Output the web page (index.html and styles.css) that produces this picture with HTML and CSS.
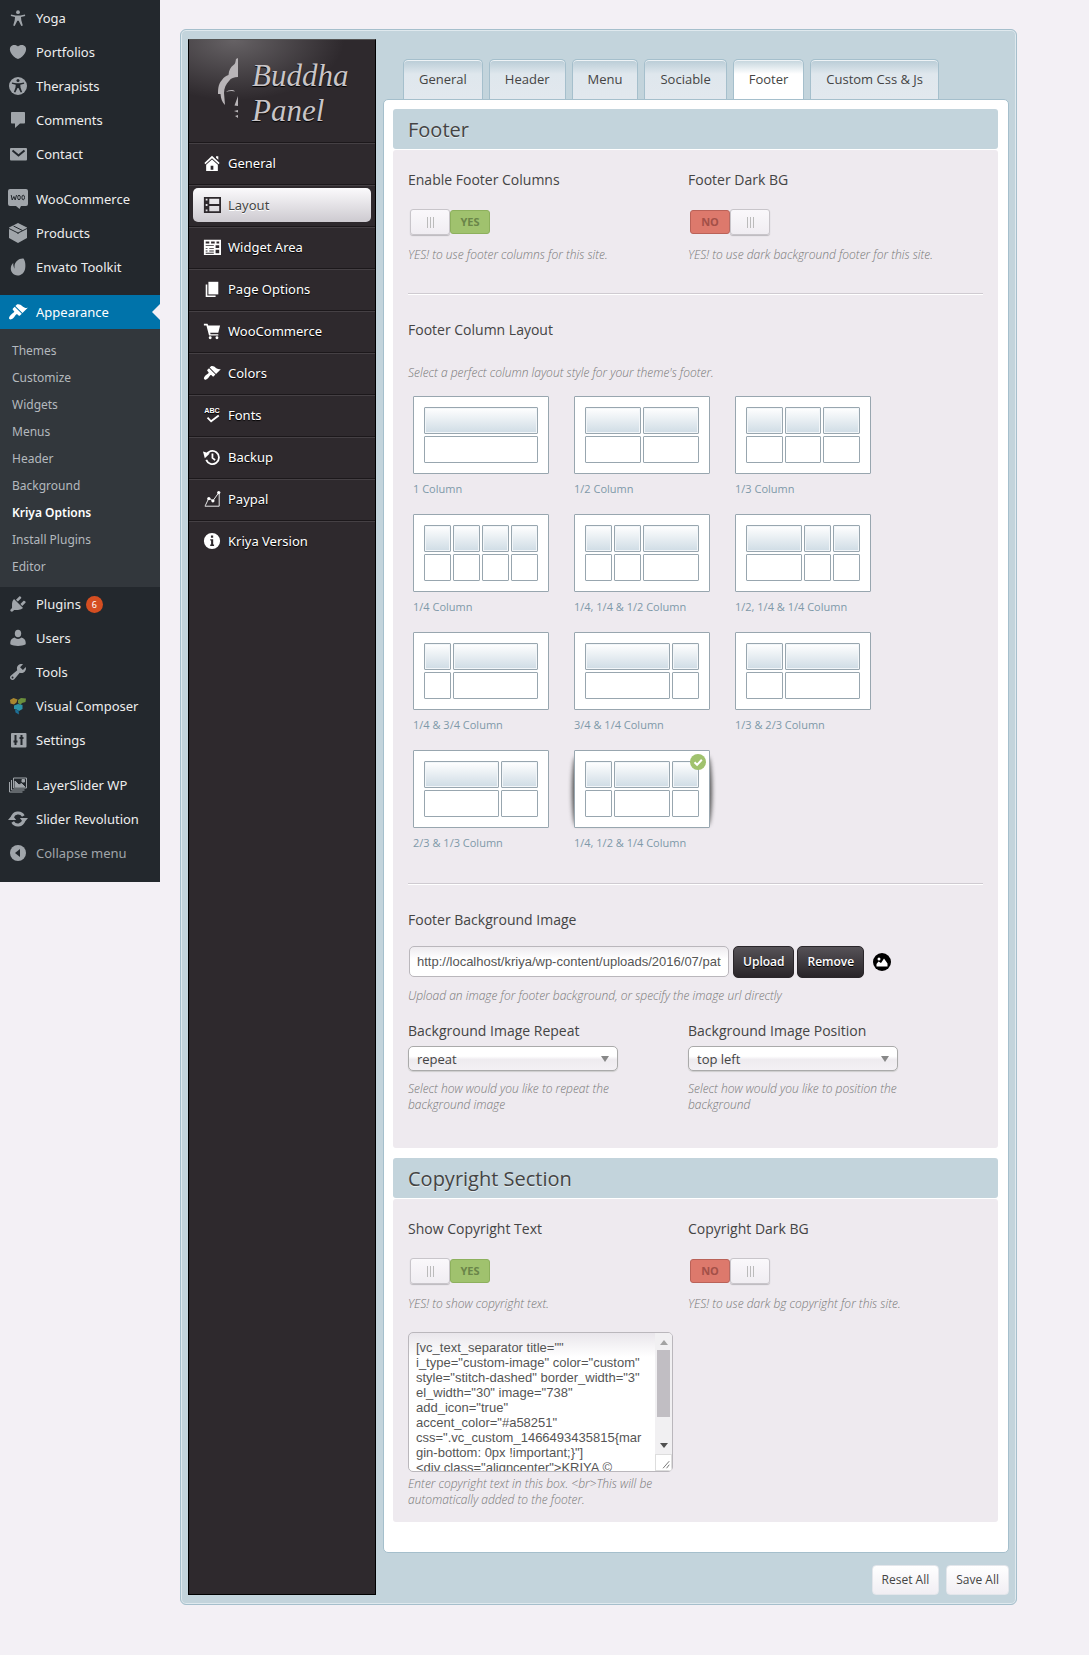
FILE: index.html
```html
<!DOCTYPE html>
<html lang="en">
<head>
<meta charset="utf-8">
<meta name="viewport" content="width=device-width, initial-scale=1">
<title>Kriya Options</title>
<link rel="stylesheet" href="styles.css">
</head>
<body>
<div class="page">
  <nav class="admin-menu" aria-label="Admin menu">
    <ul class="menu-group">
      <li><a href="#"><svg class="icon" viewBox="0 0 20 20"><circle cx="10" cy="4.2" r="1.9"/><path d="M3 6.6l4.6.9h4.8l4.6-.9.2 1.4-4.2 1.1.3 3.1 1.5 5.2-1.5.5-2.6-5.2h-1.4l-2.6 5.2-1.5-.5 1.5-5.2.3-3.1L2.800 8z"/></svg><span>Yoga</span></a></li>
      <li><a href="#"><svg class="icon" viewBox="0 0 20 20"><path d="M10 17.100c3.300-1.400 5.700-3.800 7-6.200 1.300-2.400 1.500-4.800.4-6.200-1-1.300-2.400-1.800-3.800-1.700-1.300 0-2.700.6-3.600 1.400-.9-.8-2.300-1.400-3.600-1.400C5 2.900 3.700 3.400 2.600 4.700c-1.100 1.400-.9 3.800.4 6.200 1.300 2.400 3.700 4.800 7 6.200z"/></svg><span>Portfolios</span></a></li>
      <li><a href="#"><svg class="icon" viewBox="0 0 20 20"><circle cx="10" cy="10" r="9"/><g class="hole"><circle cx="10" cy="4.600" r="1.500"/><path d="M4 6.500l4.200.700h3.600l4.200-.7.2 1.300-3.900.9.200 2.800 1.600 4.500-1.400.5L10.500 12h-1l-2.200 4.500-1.400-.5 1.600-4.500.2-2.800-3.900-.9z"/></g></svg><span>Therapists</span></a></li>
      <li><a href="#"><svg class="icon" viewBox="0 0 20 20"><path d="M4 2h12c.6 0 1 .4 1 1v9.500c0 .6-.4 1-1 1h-4l-5 4.500v-4.500H4c-.6 0-1-.4-1-1V3c0-.6.400-1 1-1z"/></svg><span>Comments</span></a></li>
      <li><a href="#"><svg class="icon" viewBox="0 0 20 20"><rect x="2" y="4" width="17" height="12.500" rx="1"/><path class="hole-line" d="M4.500 6.500l6 5 6-5"/></svg><span>Contact</span></a></li>
    </ul>
    <ul class="menu-group">
      <li><a href="#"><svg class="icon" viewBox="0 0 20 20"><path d="M2 0h16a2 2 0 0 1 2 2v13a2 2 0 0 1-2 2h-5l-1.500 3L8 17H2a2 2 0 0 1-2-2V2a2 2 0 0 1 2-2z"/><path class="woo-line" d="M3.200 6l1 5 1.700-3.500L7.200 11l1.300-5"/><ellipse class="woo-line" cx="11" cy="8.500" rx="1.300" ry="2.300"/><ellipse class="woo-line" cx="15.200" cy="8.500" rx="1.300" ry="2.300"/></svg><span>WooCommerce</span></a></li>
      <li><a href="#"><svg class="icon" viewBox="0 0 20 20"><path d="M10 0l9 4.500v10.500l-9 5-9-5V4.500z"/><path class="hole-thin" d="M1 5.500l9 4.500 9-4.500M10 10v1M5.500 3l9 4.500"/></svg><span>Products</span></a></li>
      <li><a href="#"><svg class="icon" viewBox="0 0 20 20"><path d="M15.500 1.500c-4.500-.5-8.500 3-9 7.200-.1 1-.1 2 .2 3C5.400 9.700 5 7.500 5.300 5.800 2.500 8.700 2 12.700 4.200 15.800c2.600 3.500 7.500 3.500 10.500.7 3.700-3.500 3.300-11.500.8-15z"/></svg><span>Envato Toolkit</span></a></li>
    </ul>
    <ul class="menu-group">
      <li class="current"><a href="#"><svg class="icon" viewBox="0 0 20 20"><path d="M14.480 11.060L7.410 3.990l1.500-1.500c.5-.56 2.300-.47 3.510.32 1.210.8 1.430 1.280 2.910 2.100 1.180.64 2.450 1.260 4.450.85zm-.71.71L6.700 4.700 4.930 6.470c-.39.39-.39 1.020 0 1.410l1.060 1.060c.39.39.39 1.030 0 1.420-.6.6-1.430 1.110-2.210 1.690-.35.26-.7.53-1.010.84C1.430 14.230.4 16.080 1.400 17.070c.99 1 2.840-.03 4.180-1.360.31-.31.580-.66.850-1.020.57-.78 1.080-1.610 1.690-2.210.39-.39 1.020-.39 1.410 0l1.060 1.060c.39.39 1.020.39 1.410 0z"/></svg><span>Appearance</span></a>
        <ul class="submenu">
          <li><a href="#">Themes</a></li>
          <li><a href="#">Customize</a></li>
          <li><a href="#">Widgets</a></li>
          <li><a href="#">Menus</a></li>
          <li><a href="#">Header</a></li>
          <li><a href="#">Background</a></li>
          <li><a href="#" class="is-on">Kriya Options</a></li>
          <li><a href="#">Install Plugins</a></li>
          <li><a href="#">Editor</a></li>
        </ul>
      </li>
      <li><a href="#"><svg class="icon" viewBox="0 0 20 20"><path d="M13.110 4.360L9.870 7.600 8 5.730l3.240-3.240c.35-.34 1.050-.2 1.560.32.52.51.66 1.210.31 1.550zm-8 1.770l.91-1.120 9.010 9.010-1.190.84c-.71.71-2.630 1.160-3.820 1.160H6.140L4.900 17.260c-.59.59-1.540.59-2.120 0-.59-.58-.59-1.530 0-2.120l1.240-1.240v-3.880c0-1.130.4-3.190 1.090-3.890zm7.260 3.970l3.240-3.240c.34-.35 1.040-.21 1.550.31.520.51.660 1.210.31 1.550l-3.240 3.250z"/></svg><span>Plugins</span><span class="badge">6</span></a></li>
      <li><a href="#"><svg class="icon" viewBox="0 0 20 20"><ellipse cx="10" cy="5.500" rx="3.200" ry="3.800"/><path d="M6.500 9.500c1 .9 2 1.400 3.500 1.400s2.500-.5 3.500-1.400c2.400.5 4.200 2.500 4.200 5v1.700c-2 1.200-4.700 1.700-7.700 1.700s-5.700-.5-7.700-1.700v-1.700c0-2.500 1.800-4.500 4.200-5z"/></svg><span>Users</span></a></li>
      <li><a href="#"><svg class="icon" viewBox="0 0 20 20"><path fill-rule="evenodd" d="M16.680 9.770c-1.340 1.340-3.300 1.670-4.950.99l-5.410 6.520c-.99.99-2.590.99-3.580 0s-.99-2.590 0-3.570l6.520-5.420c-.68-1.650-.35-3.610.99-4.950 1.280-1.280 3.120-1.620 4.720-1.060l-2.890 2.890 2.820 2.820 2.860-2.870c.53 1.580.18 3.390-1.080 4.650zM3.810 16.210c.4.39 1.040.39 1.430 0 .4-.4.4-1.040 0-1.430-.39-.4-1.030-.4-1.430 0-.39.39-.39 1.030 0 1.430z"/></svg><span>Tools</span></a></li>
      <li><a href="#"><svg class="icon" viewBox="0 0 20 20"><path fill="#a8862f" d="M2 4l3.500-2 4 1.500-1 3L6 8.500 2.500 7.500z"/><path fill="#6b8f3c" d="M10 4l3-2 5 .5-.5 3.500-3.500 1-1.500 2L10 7z"/><path fill="#2c93a6" d="M6 9.500l4-1.500 4.500 1v4L11 15l-2.500-1.500L6 13z"/><path fill="#1d6f96" d="M7 13.500l3.500 1 .5 4-3.500-2z"/></svg><span>Visual Composer</span></a></li>
      <li><a href="#"><svg class="icon" viewBox="0 0 20 20"><rect x="3" y="3" width="15.500" height="14.500" rx="1"/><path class="hole-line" d="M7.500 5v10M5.500 11.500h4M13.500 5v10M11.500 8h4"/></svg><span>Settings</span></a></li>
    </ul>
    <ul class="menu-group">
      <li><a href="#"><svg class="icon outline" viewBox="0 0 20 20"><path d="M5.500 3h13v10h-13zM3.500 5v10h13M1.500 7v10h13"/><path class="solid" d="M7 12V6l4 4 2.500-1.500L17 12zM14 4.500h2.500V7H14z"/></svg><span>LayerSlider WP</span></a></li>
      <li><a href="#"><svg class="icon outline heavy" viewBox="0 0 20 20"><path d="M4.300 8.500A6 6 0 0 1 15.300 7M15.700 11.500A6 6 0 0 1 4.700 13"/><path class="solid" stroke="none" d="M0 11l4.200-5 4 5zM20 9l-4.200 5-4-5z"/></svg><span>Slider Revolution</span></a></li>
      <li class="collapse"><a href="#"><svg class="icon" viewBox="0 0 20 20"><circle cx="10" cy="10" r="8"/><path class="hole" d="M12 6v8l-5-4z"/></svg><span>Collapse menu</span></a></li>
    </ul>
  </nav>

  <main class="panel">
    <aside class="side">
      <div class="brand">
        <svg class="brand-face" viewBox="0 0 20 62"><path d="M20 0v19c-4 0-7 1-9 4-3 3-5 7-5 12l1 12c-3-3-4-6-4.500-11L0 36c0-7 1-11 4-14 2-3 4-4 6.500-5 .5-5 2-8 5-10 2-1 2-4 2.500-6z"/><path d="M8 34c2-2 7-3 9-.5-3-1-6-.5-9 .5zM20 38l-3.500 9.500 3.500.5zM16 53l4-1v2.500zM17 58l3-1v3z"/></svg>
        <span class="brand-name">Buddha<br>Panel</span>
      </div>
      <ul class="side-menu">
        <li><a href="#"><svg class="icon" viewBox="0 0 20 20"><path d="M10 2l8.500 8-1.200 1.300L10 4.600l-7.300 6.700L1.500 10zM14.500 2.500H17v4l-2.500-2.300z"/><path fill-rule="evenodd" d="M10 6l6.500 6v7h-13v-7zM8.500 13v4.500h3V13z"/></svg><span>General</span></a></li>
        <li class="is-active"><a href="#"><svg class="icon" viewBox="0 0 20 20"><path fill-rule="evenodd" d="M1 1h19v18H1zM7 3v6h11V3zM7 11v6h11v-6zM3 3v2h2V3zM3 9v2h2V9zM3 15v2h2v-2z"/></svg><span>Layout</span></a></li>
        <li><a href="#"><svg class="icon" viewBox="0 0 20 20"><path fill-rule="evenodd" d="M1 2h19v17H1zM3 4v2h4V4zM9 4v2h4V4zM15 4v2h3V4zM3 8v1h9V8zM3 11v1h2v-1zM7 11v1h5v-1zM3 14v1h2v-1zM7 14v1h5v-1zM3 16.500v1h9v-1zM14 8v3h4V8zM14 13v4h4v-4z"/></svg><span>Widget Area</span></a></li>
        <li><a href="#"><svg class="icon" viewBox="0 0 20 20"><path d="M6 2h11v14H6z"/><path d="M3 5h1.800v12.200H14V19H3z"/></svg><span>Page Options</span></a></li>
        <li><a href="#"><svg class="icon" viewBox="0 0 20 20"><path d="M1 2h4l.8 2H19l-2 8H8l.4 1.500H17V15H6.700L3.800 3.800H1z"/><circle cx="8" cy="17.500" r="1.600"/><circle cx="15.500" cy="17.500" r="1.600"/></svg><span>WooCommerce</span></a></li>
        <li><a href="#"><svg class="icon" viewBox="0 0 20 20"><path d="M14.480 11.060L7.410 3.990l1.500-1.500c.5-.56 2.300-.47 3.510.32 1.210.8 1.430 1.280 2.910 2.100 1.180.64 2.450 1.260 4.450.85zm-.71.71L6.700 4.700 4.930 6.470c-.39.39-.39 1.020 0 1.410l1.060 1.060c.39.39.39 1.030 0 1.420-.6.6-1.430 1.110-2.210 1.690-.35.26-.7.53-1.010.84C1.430 14.230.4 16.080 1.400 17.070c.99 1 2.840-.03 4.180-1.360.31-.31.580-.66.850-1.020.57-.78 1.080-1.610 1.690-2.210.39-.39 1.020-.39 1.410 0l1.060 1.060c.39.39 1.020.39 1.410 0z"/></svg><span>Colors</span></a></li>
        <li><a href="#"><svg class="icon" viewBox="0 0 20 20"><text class="abc" x="10" y="8" text-anchor="middle">ABC</text><path class="tick" d="M5 13l4 4 8.500-6.500"/></svg><span>Fonts</span></a></li>
        <li><a href="#"><svg class="icon" viewBox="0 0 20 20"><path class="tick" d="M3.600 8a7.300 7.300 0 1 1 0 5.200M10.500 6v5l3 2.500"/><path d="M0 4l7.500 2L2 11.500z"/></svg><span>Backup</span></a></li>
        <li><a href="#"><svg class="icon" viewBox="0 0 20 20"><path class="thin" d="M2 18h16V4M2.500 17.500L6.500 9l4.500 3L17.500 3"/><circle cx="6.500" cy="9.500" r="1.800"/><circle cx="11" cy="12" r="1.800"/><circle cx="17.500" cy="2.800" r="1.800"/></svg><span>Paypal</span></a></li>
        <li><a href="#"><svg class="icon" viewBox="0 0 20 20"><path fill-rule="evenodd" d="M10 1a9 9 0 1 1 0 18 9 9 0 0 1 0-18zM8.800 4v2.500h2.500V4zM8 8v1.500h1V14H8v1.500h4.300V14h-1V8z"/></svg><span>Kriya Version</span></a></li>
      </ul>
    </aside>

    <div class="content">
      <nav class="tabs" aria-label="Layout sections">
        <a href="#">General</a>
        <a href="#">Header</a>
        <a href="#">Menu</a>
        <a href="#">Sociable</a>
        <a href="#" class="is-active">Footer</a>
        <a href="#">Custom Css &amp; Js</a>
      </nav>

      <form class="sheet" id="options">
        <section class="box">
          <h2>Footer</h2>
          <div class="box-body">
            <div class="pair">
              <div class="field">
                <label class="label" for="footer-columns">Enable Footer Columns</label>
                <div class="switch on"><input type="checkbox" id="footer-columns" checked><span class="knob"></span><span class="state">YES</span></div>
                <p class="hint">YES! to use footer columns for this site.</p>
              </div>
              <div class="field">
                <label class="label" for="footer-dark">Footer Dark BG</label>
                <div class="switch"><input type="checkbox" id="footer-dark"><span class="state">NO</span><span class="knob"></span></div>
                <p class="hint">YES! to use dark background footer for this site.</p>
              </div>
            </div>
            <hr>
            <h3 class="label">Footer Column Layout</h3>
            <p class="hint intro">Select a perfect column layout style for your theme's footer.</p>
            <div class="layouts">
              <label class="layout"><input type="radio" name="layout"><span class="thumb c1"><i></i><i></i></span><span>1 Column</span></label>
              <label class="layout"><input type="radio" name="layout"><span class="thumb c2"><i></i><i></i><i></i><i></i></span><span>1/2 Column</span></label>
              <label class="layout"><input type="radio" name="layout"><span class="thumb c3"><i></i><i></i><i></i><i></i><i></i><i></i></span><span>1/3 Column</span></label>
              <label class="layout"><input type="radio" name="layout"><span class="thumb c4"><i></i><i></i><i></i><i></i><i></i><i></i><i></i><i></i></span><span>1/4 Column</span></label>
              <label class="layout"><input type="radio" name="layout"><span class="thumb c4"><i></i><i></i><i class="s2"></i><i></i><i></i><i class="s2"></i></span><span>1/4, 1/4 &amp; 1/2 Column</span></label>
              <label class="layout"><input type="radio" name="layout"><span class="thumb c4"><i class="s2"></i><i></i><i></i><i class="s2"></i><i></i><i></i></span><span>1/2, 1/4 &amp; 1/4 Column</span></label>
              <label class="layout"><input type="radio" name="layout"><span class="thumb c4"><i></i><i class="s3"></i><i></i><i class="s3"></i></span><span>1/4 &amp; 3/4 Column</span></label>
              <label class="layout"><input type="radio" name="layout"><span class="thumb c4"><i class="s3"></i><i></i><i class="s3"></i><i></i></span><span>3/4 &amp; 1/4 Column</span></label>
              <label class="layout"><input type="radio" name="layout"><span class="thumb c3"><i></i><i class="s2"></i><i></i><i class="s2"></i></span><span>1/3 &amp; 2/3 Column</span></label>
              <label class="layout"><input type="radio" name="layout"><span class="thumb c3"><i class="s2"></i><i></i><i class="s2"></i><i></i></span><span>2/3 &amp; 1/3 Column</span></label>
              <label class="layout chosen"><input type="radio" name="layout" checked><span class="thumb c4"><i></i><i class="s2"></i><i></i><i></i><i class="s2"></i><i></i></span><svg class="check" viewBox="0 0 16 16"><circle cx="8" cy="8" r="8"/><path d="M4.500 8.200l2.600 2.600 4.700-5"/></svg><span>1/4, 1/2 &amp; 1/4 Column</span></label>
            </div>
            <hr>
            <label class="label" for="bg-url">Footer Background Image</label>
            <div class="upload">
              <input type="text" id="bg-url" value="http://localhost/kriya/wp-content/uploads/2016/07/pattern.png">
              <button type="button" class="dark">Upload</button>
              <button type="button" class="dark">Remove</button>
              <svg class="preview" viewBox="0 0 18 18"><circle cx="9" cy="9" r="9"/><circle class="w" cx="6" cy="6" r="1.500"/><path class="w" d="M3.500 13.500V11l2-2.500L8 10l3-4.500 3.500 5v3z"/></svg>
            </div>
            <p class="hint after">Upload an image for footer background, or specify the image url directly</p>
            <div class="pair">
              <div class="field">
                <label class="label" for="bg-repeat">Background Image Repeat</label>
                <div class="select"><select id="bg-repeat"><option>repeat</option><option>no-repeat</option></select><svg viewBox="0 0 8 6"><path d="M0 0h8L4 6z"/></svg></div>
                <p class="hint after">Select how would you like to repeat the background image</p>
              </div>
              <div class="field">
                <label class="label" for="bg-position">Background Image Position</label>
                <div class="select"><select id="bg-position"><option>top left</option><option>center</option></select><svg viewBox="0 0 8 6"><path d="M0 0h8L4 6z"/></svg></div>
                <p class="hint after">Select how would you like to position the background</p>
              </div>
            </div>
          </div>
        </section>

        <section class="box compact">
          <h2>Copyright Section</h2>
          <div class="box-body">
            <div class="pair">
              <div class="field">
                <label class="label" for="copy-show">Show Copyright Text</label>
                <div class="switch on"><input type="checkbox" id="copy-show" checked><span class="knob"></span><span class="state">YES</span></div>
                <p class="hint">YES! to show copyright text.</p>
              </div>
              <div class="field">
                <label class="label" for="copy-dark">Copyright Dark BG</label>
                <div class="switch"><input type="checkbox" id="copy-dark"><span class="state">NO</span><span class="knob"></span></div>
                <p class="hint">YES! to use dark bg copyright for this site.</p>
              </div>
            </div>
            <div class="editor">
              <textarea aria-label="Copyright text" spellcheck="false">[vc_text_separator title="" i_type="custom-image" color="custom" style="stitch-dashed" border_width="3" el_width="30" image="738" add_icon="true" accent_color="#a58251" css=".vc_custom_1466493435815{margin-bottom: 0px !important;}"]
&lt;div class="aligncenter"&gt;KRIYA ©</textarea>
              <div class="scroller" aria-hidden="true">
                <svg viewBox="0 0 8 5"><path fill="#a3a3a3" d="M0 5h8L4 0z"/></svg>
                <div class="scroll-thumb"></div>
                <svg class="down" viewBox="0 0 8 5"><path fill="#505050" d="M0 0h8L4 5z"/></svg>
                <svg class="grip" viewBox="0 0 17 17"><path d="M8 15l7-8M12 15l3-4"/></svg>
              </div>
            </div>
            <p class="hint below">Enter copyright text in this box. &lt;br&gt;This will be automatically added to the footer.</p>
          </div>
        </section>
      </form>

      <div class="actions">
        <button type="reset" form="options">Reset All</button>
        <button type="submit" form="options">Save All</button>
      </div>
    </div>
  </main>
</div>
</body>
</html>
```
FILE: styles.css
```css
* { box-sizing: border-box; }
body {
  margin: 0;
  background: #f3f0f5;
  color: #444;
  font: 13px/20px "Open Sans", "Noto Sans", sans-serif;
}
ul { list-style: none; margin: 0; padding: 0; }
a { color: inherit; text-decoration: none; }
h2, h3, p { margin: 0; font-weight: 400; }
button, input, select, textarea { font: inherit; margin: 0; }
.page { display: flex; align-items: flex-start; }

/* Admin menu */
.admin-menu {
  flex: none;
  width: 160px;
  padding: 1px 0 12px;
  background: #23282d;
  color: #eee;
  font: 13px/18px "Noto Sans", "Open Sans", sans-serif;
}
.menu-group + .menu-group { margin-top: 11px; }
.menu-group > li > a {
  display: flex;
  align-items: center;
  height: 34px;
  padding-left: 8px;
}
.icon { flex: none; width: 20px; height: 20px; fill: #a0a5aa; }
.menu-group .icon { margin-right: 8px; }
.hole { fill: #23282d; }
.hole-line, .hole-thin, .woo-line { fill: none; stroke: #23282d; stroke-width: 2; }
.hole-thin, .woo-line { stroke-width: 1; }
.outline { fill: none; stroke: #a0a5aa; }
.outline.heavy { stroke-width: 3; }
.solid { fill: #a0a5aa; }
.current > a {
  position: relative;
  background: #0073aa;
  color: #fff;
}
.current .icon { fill: #fff; }
.current > a::after {
  content: "";
  position: absolute;
  right: 0;
  top: 9px;
  border: 8px solid transparent;
  border-left-width: 0;
  border-right-color: #f3f0f5;
}
.submenu { padding: 9px 0 6px; background: #32373c; color: #b4b9be; font-size: 12px; }
.submenu a { display: block; padding: 4px 12px 5px; }
.submenu .is-on { color: #fff; font-weight: 600; }
.badge {
  width: 17px;
  height: 17px;
  margin-left: 5px;
  border-radius: 50%;
  background: #d54e21;
  color: #fff;
  font-size: 9px;
  line-height: 17px;
  text-align: center;
}
.collapse { color: #a0a5aa; }

/* Panel frame */
.panel {
  flex: 1;
  min-width: 0;
  display: flex;
  gap: 7px;
  margin: 29px 72px 50px 20px;
  padding: 8px 7px;
  background: #c3d4dc;
  border: 1px solid #a5bfcc;
  border-radius: 6px;
  box-shadow: inset 0 0 0 1px #dfe9ee;
}
.side {
  flex: none;
  width: 188px;
  margin: 1px 0;
  background: #2e292d;
  border: 1px solid #000;
  border-top-color: #555;
  color: #fff;
  text-shadow: 0 1px 1px #000;
}
.brand {
  display: flex;
  gap: 14px;
  height: 103px;
  padding: 18px 0 0 29px;
  background: radial-gradient(ellipse 110px 60px at 45px 0, #666265, transparent);
}
.brand-face { width: 20px; height: 62px; fill: #b9b5b8; }
.brand-name {
  color: #c9c5c8;
  font: italic 31px/35px "Liberation Serif", serif;
}
.side-menu li {
  height: 42px;
  padding: 2px 4px;
  border-top: 1px solid #454044;
  box-shadow: 0 -1px #1c181b;
}
.side-menu a {
  display: flex;
  align-items: center;
  gap: 7px;
  height: 34px;
  padding-left: 10px;
  border-radius: 5px;
  font: 13px/18px "Noto Sans", "Open Sans", sans-serif;
}
.side-menu .icon { width: 18px; height: 18px; fill: #fff; }
.side-menu .is-active a {
  background: linear-gradient(#fbfafc, #cdcad0);
  color: #444;
  text-shadow: 0 1px #fff;
}
.side-menu .is-active .icon { fill: #2e292d; }
.tick, .thin { fill: none; stroke: #fff; stroke-width: 2; }
.thin { stroke-width: 1; }
.abc { font: 700 8px "Liberation Sans", sans-serif; }

/* Tabs and sheet */
.content { flex: 1; min-width: 0; padding-top: 21px; }
.tabs { display: flex; gap: 6px; padding-left: 20px; }
.tabs a {
  height: 40px;
  padding: 9px 15px;
  border: 1px solid #a5bfcc;
  border-bottom: 0;
  border-radius: 5px 5px 0 0;
  background: linear-gradient(#b9ccd6, #dfe7ed 14px, #e2e8ee);
  box-shadow: inset 0 1px #eef3f6;
}
.tabs .is-active {
  position: relative;
  margin-bottom: -1px;
  background: linear-gradient(#c3d4dc, #fff 14px);
}
.sheet {
  padding: 9px 10px 30px 9px;
  background: #fff;
  border: 1px solid #a5bfcc;
  border-radius: 5px;
}
.box + .box { margin-top: 10px; }
.box h2 {
  height: 40px;
  padding: 0 15px;
  border-radius: 3px;
  background: #c3d4dc;
  font-size: 20px;
  line-height: 42px;
  text-shadow: 0 1px #e4edf1;
}
.box-body {
  margin-top: 1px;
  padding: 20px 15px 35px;
  border-radius: 3px;
  background: #eeeaef;
}
.compact .box-body { padding-bottom: 14px; }
.pair { display: flex; gap: 60px; }
.field { flex: none; width: 220px; }
.label { display: block; font-size: 14px; line-height: 20px; color: #444; }
.hint { margin-top: 12px; font-size: 12px; line-height: 16px; font-style: italic; font-weight: 300; color: #777; }
.switch + .hint { white-space: nowrap; }
hr {
  height: 2px;
  margin: 30px 0 25px;
  border: 0;
  border-top: 1px solid #cfcbd1;
  background: #fff;
}
.hint.intro { margin-top: 25px; }
.hint.after { margin-top: 10px; }
.hint.after + .pair { margin-top: 17px; }
.hint.below { width: 265px; margin-top: 4px; }

.switch {
  position: relative;
  display: flex;
  width: 80px;
  height: 26px;
  margin: 19px 0 0 2px;
}
.switch input {
  position: absolute;
  inset: 0;
  width: 80px;
  height: 26px;
  margin: 0;
  opacity: 0;
}
.knob {
  flex: 1;
  border: 1px solid #c8c5ca;
  border-radius: 3px;
  background:
    linear-gradient(90deg, #bbb 1px, transparent 1px 3px, #bbb 3px 4px, transparent 4px 6px, #bbb 6px) center / 7px 11px no-repeat,
    linear-gradient(#faf8fb, #f0edf2);
  box-shadow: 0 1px 1px #bbb8bd;
}
.state {
  flex: 1;
  margin: 1px 0;
  border: 1px solid #ba6258;
  border-radius: 3px;
  background: #dd796c;
  color: #a35048;
  font-size: 11px;
  font-weight: 700;
  line-height: 22px;
  text-align: center;
}
.on .state { border-color: #8db05d; background: #a0c26e; color: #6a8549; }

/* Column layout picker */
.layouts {
  display: grid;
  grid-template-columns: repeat(3, 136px);
  gap: 17px 25px;
  margin: 15px 0 32px 5px;
}
.layout {
  position: relative;
  color: #7e99a9;
  font: 500 11px/16px "Open Sans", "Noto Sans", sans-serif;
  white-space: nowrap;
}
.layout input { position: absolute; opacity: 0; margin: 0; }
.thumb {
  position: relative;
  display: grid;
  gap: 2px;
  height: 78px;
  margin-bottom: 7px;
  padding: 10px;
  border: 1px solid #98a6af;
  border-radius: 1px;
  background: #fff;
}
.c1 { grid-template: repeat(2, 1fr) / 1fr; }
.c2 { grid-template: repeat(2, 1fr) / repeat(2, 1fr); }
.c3 { grid-template: repeat(2, 1fr) / repeat(3, 1fr); }
.c4 { grid-template: repeat(2, 1fr) / repeat(4, 1fr); }
.s2 { grid-column: span 2; }
.s3 { grid-column: span 3; }
.thumb i {
  border: 1px solid #98a6af;
  border-radius: 1px;
}
.c1 i:nth-child(-n+1), .c2 i:nth-child(-n+2), .c3 i:nth-child(-n+3), .c4 i:nth-child(-n+4) {
  background: linear-gradient(#fff, #cfdce5);
  box-shadow: inset 0 0 0 1px #f2f6f9;
}
.c3 i:nth-child(3):nth-last-child(2),
.c4 i:nth-child(3):nth-last-child(2),
.c4 i:nth-child(4):nth-last-child(3),
.c4 i:nth-child(4):last-child {
  background: #fff;
  box-shadow: none;
}
.chosen::before {
  content: "";
  position: absolute;
  inset: 7px -2px auto;
  height: 68px;
  border-radius: 3% / 50%;
  background: #555;
  filter: blur(2px);
}
.check {
  position: absolute;
  top: 4px;
  right: 4px;
  width: 16px;
  height: 16px;
  fill: #a0c26e;
}
.check path { fill: none; stroke: #fff; stroke-width: 2; }

/* Form controls */
.upload { display: flex; gap: 3px; margin: 16px 0 0 1px; }
.upload input {
  width: 320px;
  height: 31px;
  margin-right: 1px;
  padding: 0 7px;
  border: 1px solid #bab7bc;
  border-radius: 5px;
  background: linear-gradient(#eeebef, #fff 12px);
  color: #555;
  font: 13px/20px "Liberation Sans", Arial, sans-serif;
}
.dark {
  height: 32px;
  padding: 0 9px;
  border: 1px solid #2a262a;
  border-radius: 5px;
  background: linear-gradient(#565257, #292529);
  color: #fff;
  font-size: 12px;
  font-weight: 600;
  text-shadow: 0 1px #000;
}
.preview { align-self: center; width: 18px; height: 18px; margin-left: 6px; }
.w { fill: #fff; }
.select { display: grid; grid-template-columns: 1fr 24px; align-items: center; width: 210px; margin-top: 5px; }
.select select {
  grid-area: 1 / 1 / 2 / 3;
  height: 25px;
  padding: 0 8px;
  appearance: none;
  border: 1px solid #aaa;
  border-radius: 5px;
  background: linear-gradient(#fff 40%, #eeebef 55%, #f3f0f4);
  box-shadow: 0 1px 1px #ccc;
  color: #444;
}
.select svg { grid-area: 1 / 2; width: 8px; height: 6px; margin-left: 7px; fill: #888; pointer-events: none; }
.editor {
  display: flex;
  width: 265px;
  height: 140px;
  margin-top: 20px;
  overflow: hidden;
  border: 1px solid #bab7bc;
  border-radius: 5px;
  background: linear-gradient(#e9e6eb, #fff 24px);
}
.editor textarea {
  flex: 1;
  min-width: 0;
  padding: 7px;
  border: 0;
  background: none;
  color: #555;
  font: 13px/15px "Liberation Sans", Arial, sans-serif;
  overflow-wrap: break-word;
  resize: none;
  scrollbar-width: none;
}
.scroller {
  display: flex;
  flex-direction: column;
  align-items: center;
  width: 17px;
  padding-top: 7px;
  background: #f1f0f2;
}
.scroller svg { width: 8px; height: 5px; }
.scroll-thumb { width: 13px; height: 67px; margin-top: 5px; background: #c1bec3; }
.scroller .down { margin: auto 0 6px; }
.scroller .grip { width: 17px; height: 17px; background: #fff; border: 1px solid #ddd; fill: none; stroke: #666; }

/* Footer actions */
.actions { display: flex; justify-content: flex-end; gap: 7px; padding: 12px 0 1px; }
.actions button {
  height: 30px;
  padding: 0 9px;
  border: 1px solid #e3e6eb;
  border-radius: 4px;
  background: linear-gradient(#fff, #f1eef3);
  color: #444;
  font-size: 12px;
}
```
